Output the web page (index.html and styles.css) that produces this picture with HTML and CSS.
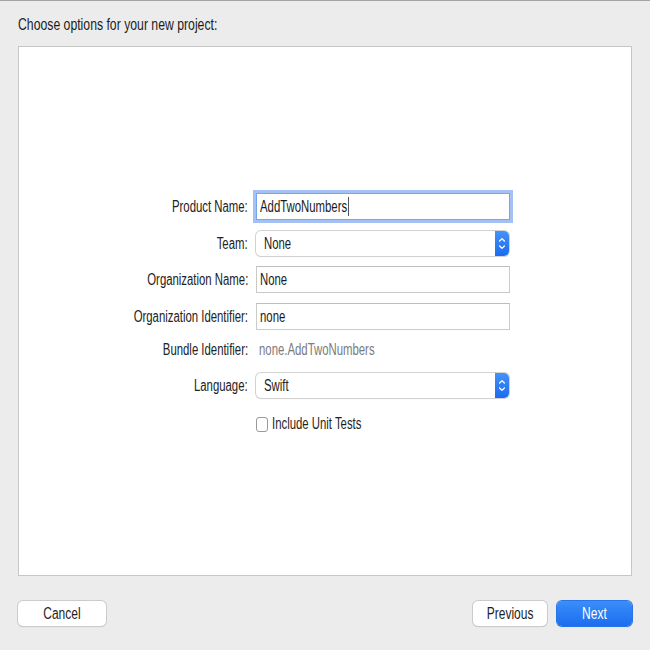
FILE: index.html
```html
<!DOCTYPE html>
<html>
<head>
<meta charset="utf-8">
<title>Choose options</title>
<link rel="stylesheet" href="styles.css">
</head>
<body>
  <header class="head"><span class="t">Choose options for your new project:</span></header>
  <section class="panel">
    <div class="form">
      <div class="row row-field">
        <label class="lbl"><span class="t">Product Name:</span></label>
        <div class="field focus"><span class="t">AddTwoNumbers<i class="caret"></i></span></div>
      </div>
      <div class="row row-popup first-popup">
        <label class="lbl"><span class="t">Team:</span></label>
        <div class="popup">
          <span class="val"><span class="t">None</span></span>
          <span class="stepper"><svg width="14" height="25" viewBox="0 0 14 25"><polyline points="4.6,10 7,7.6 9.4,10" fill="none" stroke="#fff" stroke-width="1.3" stroke-linecap="round" stroke-linejoin="round"/><polyline points="4.6,15 7,17.4 9.4,15" fill="none" stroke="#fff" stroke-width="1.3" stroke-linecap="round" stroke-linejoin="round"/></svg></span>
        </div>
      </div>
      <div class="row row-field">
        <label class="lbl"><span class="t">Organization Name:</span></label>
        <div class="field"><span class="t">None</span></div>
      </div>
      <div class="row row-field">
        <label class="lbl"><span class="t">Organization Identifier:</span></label>
        <div class="field"><span class="t">none</span></div>
      </div>
      <div class="row row-info">
        <label class="lbl"><span class="t">Bundle Identifier:</span></label>
        <div class="info"><span class="t">none.AddTwoNumbers</span></div>
      </div>
      <div class="row row-popup lang">
        <label class="lbl"><span class="t">Language:</span></label>
        <div class="popup">
          <span class="val"><span class="t">Swift</span></span>
          <span class="stepper"><svg width="14" height="25" viewBox="0 0 14 25"><polyline points="4.6,10 7,7.6 9.4,10" fill="none" stroke="#fff" stroke-width="1.3" stroke-linecap="round" stroke-linejoin="round"/><polyline points="4.6,15 7,17.4 9.4,15" fill="none" stroke="#fff" stroke-width="1.3" stroke-linecap="round" stroke-linejoin="round"/></svg></span>
        </div>
      </div>
      <div class="row row-check">
        <span class="lbl"></span>
        <label class="check"><span class="box"></span><span class="t">Include Unit Tests</span></label>
      </div>
    </div>
  </section>
  <footer class="foot">
    <button class="btn cancel"><span class="t">Cancel</span></button>
    <div class="nav">
      <button class="btn prev"><span class="t">Previous</span></button>
      <button class="btn next"><span class="t">Next</span></button>
    </div>
  </footer>
</body>
</html>
```
FILE: styles.css
```css
html, body {
  margin: 0;
  padding: 0;
}
body {
  background: #ececec;
  font-family: "Liberation Sans", Arial, sans-serif;
  font-size: 16px;
  color: #1f1f1f;
  border-top: 1px solid #a4a4a4;
}
.t {
  display: inline-block;
  transform: scaleX(0.71);
  transform-origin: left center;
  white-space: nowrap;
}
.head {
  padding: 15px 18px 12px;
  line-height: 18px;
  color: #1c1c1c;
}
.head .t { transform: scaleX(0.765); }
.panel {
  margin: 0 18px;
  height: 530px;
  box-sizing: border-box;
  border: 1px solid #c6c6c6;
  background: #fff;
  padding-top: 146px;
}
.form {
  display: flex;
  flex-direction: column;
  gap: 10px;
}
.row {
  display: grid;
  grid-template-columns: 229px 254px;
  column-gap: 8px;
  align-items: center;
}
.row-field { height: 27px; }
.row-popup { height: 25px; }
.first-popup { margin-top: 1px; }
.row-info { height: 20px; }
.lang { margin-top: 3px; }
.row-check { height: 16px; margin-top: 7px; }
.lbl {
  text-align: right;
  color: #222;
}
.lbl .t { transform-origin: right center; }
.field {
  height: 27px;
  box-sizing: border-box;
  border: 1px solid #cacaca;
  border-top-color: #bdbdbd;
  background: #fff;
  padding: 0 3px;
  display: flex;
  align-items: center;
  color: #1b1b1b;
}
.field.focus {
  border-color: #7aa3e8;
  box-shadow: 0 0 0 3px #a3c1f2;
}
.caret {
  display: inline-block;
  width: 1px;
  height: 19px;
  background: #111;
  vertical-align: -4px;
  margin-left: 1px;
}
.popup {
  height: 25px;
  box-sizing: border-box;
  border-radius: 5px;
  background: #fff;
  box-shadow: 0 0 0 1px #d2d2d2, 0 1px 1px rgba(0, 0, 0, 0.18);
  display: flex;
  align-items: center;
  padding-left: 8px;
  margin-right: 1px;
  color: #1b1b1b;
}
.val { flex: 1; }
.stepper {
  width: 14px;
  align-self: stretch;
  background: linear-gradient(#4592f8, #1b6cef);
  border-radius: 0 5px 5px 0;
  display: flex;
}
.info {
  padding-left: 3px;
  color: #7b7b7b;
}
.check {
  display: flex;
  align-items: center;
  gap: 4px;
  color: #1f1f1f;
}
.box {
  width: 12px;
  height: 15px;
  box-sizing: border-box;
  border: 1px solid #9a9a9a;
  border-radius: 3px;
  background: #fff;
  flex: none;
}
.foot {
  display: flex;
  justify-content: space-between;
  padding: 25px 18px 24px;
}
.nav {
  display: flex;
  gap: 10px;
}
.btn {
  height: 25px;
  box-sizing: border-box;
  border: none;
  border-radius: 5px;
  background: #fff;
  box-shadow: 0 0 0 1px #cbcbcb, 0 1px 1px rgba(0, 0, 0, 0.2);
  display: flex;
  align-items: center;
  justify-content: center;
  font: inherit;
  color: #1e1e1e;
  padding: 0;
}
.btn .t {
  transform: scaleX(0.75);
  transform-origin: center center;
}
.cancel { width: 88px; }
.prev { width: 74px; }
.next {
  width: 75px;
  background: linear-gradient(#3b8ef9, #1c6def);
  box-shadow: 0 0 0 1px #2a74ea, 0 1px 1px rgba(0, 0, 0, 0.2);
  color: #fff;
}
```
